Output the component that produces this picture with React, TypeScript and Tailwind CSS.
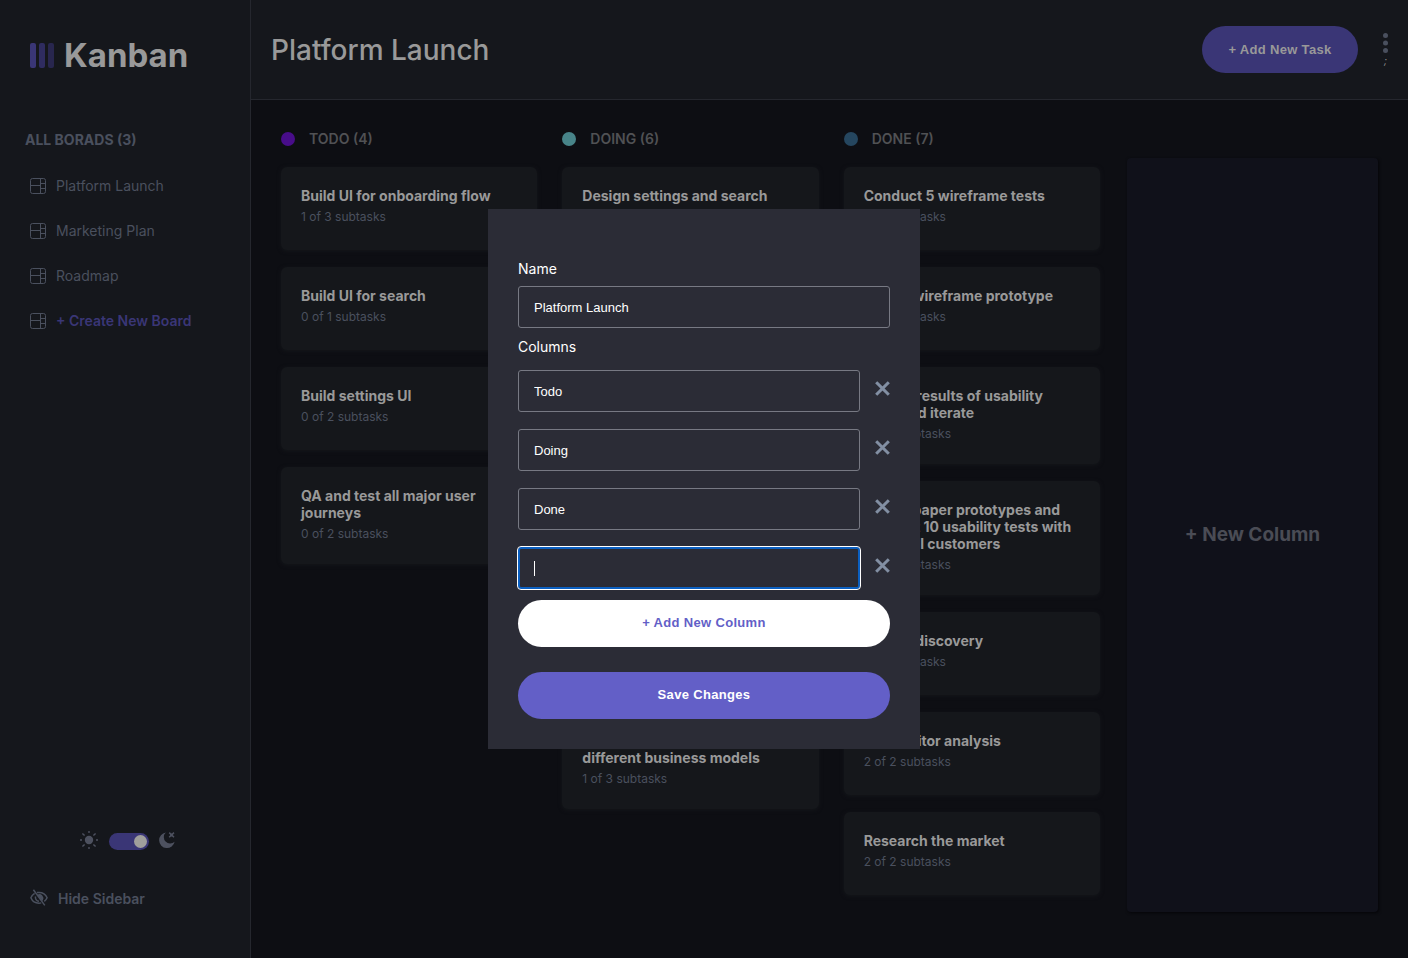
import React from 'react';

interface Task {
  title: string;
  subtasks: string;
}

interface Column {
  name: string;
  dot: string;
  tasks: Task[];
}

const boards = ['Platform Launch', 'Marketing Plan', 'Roadmap'];

const columns: Column[] = [
  {
    name: 'TODO',
    dot: 'bg-[#480d8a]',
    tasks: [
      { title: 'Build UI for onboarding flow', subtasks: '1 of 3 subtasks' },
      { title: 'Build UI for search', subtasks: '0 of 1 subtasks' },
      { title: 'Build settings UI', subtasks: '0 of 2 subtasks' },
      { title: 'QA and test all major user journeys', subtasks: '0 of 2 subtasks' },
    ],
  },
  {
    name: 'DOING',
    dot: 'bg-[#488489]',
    tasks: [
      { title: 'Design settings and search screens', subtasks: '1 of 3 subtasks' },
      { title: 'Add account management endpoints', subtasks: '2 of 3 subtasks' },
      { title: 'Design onboarding flow', subtasks: '1 of 3 subtasks' },
      { title: 'Add search endpoints', subtasks: '1 of 2 subtasks' },
      { title: 'Add authentication endpoints', subtasks: '1 of 2 subtasks' },
      {
        title: 'Research pricing points of various competitors and trial different business models',
        subtasks: '1 of 3 subtasks',
      },
    ],
  },
  {
    name: 'DONE',
    dot: 'bg-[#25465f]',
    tasks: [
      { title: 'Conduct 5 wireframe tests', subtasks: '1 of 1 subtasks' },
      { title: 'Create wireframe prototype', subtasks: '1 of 1 subtasks' },
      { title: 'Review results of usability tests and iterate', subtasks: '3 of 3 subtasks' },
      {
        title: 'Create paper prototypes and conduct 10 usability tests with potential customers',
        subtasks: '2 of 2 subtasks',
      },
      { title: 'Market discovery', subtasks: '1 of 1 subtasks' },
      { title: 'Competitor analysis', subtasks: '2 of 2 subtasks' },
      { title: 'Research the market', subtasks: '2 of 2 subtasks' },
    ],
  },
];

const columnFields = ['Todo', 'Doing', 'Done', ''];

function BoardIcon() {
  return (
    <svg className="size-4 shrink-0" viewBox="0 0 16 16" fill="none" stroke="#4a505e" aria-hidden="true">
      <rect x="0.5" y="0.5" width="15" height="15" rx="2" />
      <path d="M10.5 0.5v15M0.5 7.5h10M10.5 5.5h5M10.5 10.5h5" />
    </svg>
  );
}

function SunIcon() {
  return (
    <svg className="size-5" viewBox="0 0 20 20" fill="#4d515f" aria-hidden="true">
      <circle cx="10" cy="9" r="4.2" />
      <path
        d="M10 0v2M10 16v2M1 9h2M17 9h2M3.4 2.4l2.2 2.2M14.4 13.4l2.2 2.2M3.4 15.6l2.2-2.2M14.4 4.6l2.2-2.2"
        stroke="#4d515f"
        strokeWidth="1.4"
      />
    </svg>
  );
}

function MoonIcon() {
  return (
    <svg className="h-[18px] w-4" viewBox="0 0 16 18" fill="#4d515f" aria-hidden="true">
      <path d="M6.8 0.6A6 6 0 0 0 15.6 9.8 7.8 7.8 0 1 1 6.8 0.6Z" />
      <path d="M10.2 0.6l4.8 4.6M15 0.6l-4.8 4.6" stroke="#4d515f" strokeWidth="1.5" />
      <circle cx="12.6" cy="2.9" r="1.5" />
    </svg>
  );
}

function HiddenEyeIcon() {
  return (
    <svg className="h-5 w-[18px]" viewBox="0 0 18 20" fill="none" stroke="#4a505e" strokeWidth="1.5" aria-hidden="true">
      <path d="M4.6 4.4C2.8 5.6 1.5 7.3 0.9 8.8c1.2 3 4.5 5.4 8.1 5.4 0.8 0 1.5-0.1 2.2-0.3M7 3.6c0.6-0.1 1.3-0.2 2-0.2 3.6 0 6.9 2.4 8.1 5.4-0.5 1.2-1.5 2.5-2.8 3.5M5.6 7.4A3.6 3.6 0 0 0 9 12.2M3.4 0.8l11.4 15.6" />
      <path d="M8 6.2a3.3 3.3 0 0 1 4.2 4.6Z" fill="#4a505e" />
    </svg>
  );
}

function Sidebar() {
  return (
    <aside className="flex w-[251px] shrink-0 flex-col border-r border-[#25272e] bg-[#15171c]">
      <div className="flex items-center gap-[10px] pt-[31px] pl-[30px]">
        <svg className="h-[25px] w-6" viewBox="0 0 24 25" aria-hidden="true">
          <rect width="6" height="25" rx="2" fill="#3a3676" />
          <rect x="9" width="6" height="25" rx="2" fill="#2f2c60" />
          <rect x="18" width="6" height="25" rx="2" fill="#28264e" />
        </svg>
        <span className="text-[33px] leading-12 font-bold text-[#999999]">Kanban</span>
      </div>

      <h2 className="mt-[51px] pl-[25px] text-sm font-bold text-[#4a505e]">ALL BORADS (3)</h2>

      <nav className="mt-[26px] flex flex-col gap-[25px] pl-[30px] text-sm text-[#4a505e]">
        {boards.map((board) => (
          <a key={board} href="#" className="flex items-center gap-[10px]">
            <BoardIcon />
            <span>{board}</span>
          </a>
        ))}
        <button type="button" className="flex items-center gap-[10px] font-semibold text-[#3a3676]">
          <BoardIcon />
          <span>+ Create New Board</span>
        </button>
      </nav>

      <div className="mt-auto flex items-center justify-center gap-[10px] pl-1">
        <SunIcon />
        <label className="flex h-[17px] w-10 cursor-pointer items-center rounded-full bg-[#3a3676] px-[2px]">
          <input type="checkbox" defaultChecked aria-label="Dark mode" className="peer sr-only" />
          <span className="size-[13px] rounded-full bg-[#a09f9c] peer-checked:ml-auto" />
        </label>
        <MoonIcon />
      </div>

      <button
        type="button"
        className="mt-[38px] mb-[49px] flex items-center gap-[10px] pl-[30px] text-sm font-semibold text-[#4a505e]"
      >
        <HiddenEyeIcon />
        Hide Sidebar
      </button>
    </aside>
  );
}

function Header() {
  return (
    <header className="flex h-[100px] shrink-0 items-center justify-between border-b border-[#25272e] bg-[#15171c] px-5">
      <h1 className="text-[28px] font-medium text-[#999999]">Platform Launch</h1>
      <div className="flex items-center gap-[25px]">
        <button
          type="button"
          className="h-[47px] w-[156px] rounded-full bg-[#3a3676] font-['Liberation_Sans',sans-serif] text-[13px] font-bold tracking-wide text-[#999999]"
        >
          + Add New Task
        </button>
        <button type="button" aria-label="Board options" className="flex flex-col items-center text-[#8a8a8a]">
          <svg className="h-5 w-[5px]" viewBox="0 0 5 20" fill="#4a505e" aria-hidden="true">
            <circle cx="2.5" cy="2.5" r="2.5" />
            <circle cx="2.5" cy="10" r="2.5" />
            <circle cx="2.5" cy="17.5" r="2.5" />
          </svg>
          <span className="text-[10px] leading-[14px] italic">;</span>
        </button>
      </div>
    </header>
  );
}

function TaskCard({ title, subtasks }: Task) {
  return (
    <article className="mb-[17px] min-h-[83px] rounded-md bg-[#15171b] px-5 pt-5 pb-[23px] shadow-[0_1px_4px_#15171b]">
      <h3 className="text-sm leading-[17px] font-bold text-[#999999]">{title}</h3>
      <p className="mt-[5px] text-xs leading-[15px] text-[#4a505e]">{subtasks}</p>
    </article>
  );
}

function Board() {
  return (
    <main className="flex flex-1 items-stretch gap-[25px] px-[30px] pt-[30px] pb-[46px]">
      {columns.map((column) => (
        <section key={column.name} className="min-w-0 flex-1">
          <div className="mb-[19px] flex h-[18px] items-center gap-[14px]">
            <span className={`size-[14px] rounded-full ${column.dot}`} />
            <h2 className="text-sm font-semibold text-[#505154]">
              {column.name} ({column.tasks.length})
            </h2>
          </div>
          {column.tasks.map((task) => (
            <TaskCard key={task.title} {...task} />
          ))}
        </section>
      ))}
      <button
        type="button"
        className="mt-7 ml-[2px] w-[251px] rounded-sm bg-[#10111a] text-[19px] font-bold text-[#4a4c55] shadow-[1px_1px_3px_#050508]"
      >
        + New Column
      </button>
    </main>
  );
}

const fieldClass =
  "h-[42px] w-full rounded-[3px] border border-[#777983] bg-transparent px-[15px] font-['Liberation_Sans',sans-serif] text-[13px] text-white";

function ColumnField({ name, label, active }: { name: string; label: string; active: boolean }) {
  return (
    <div className="flex items-center gap-[15px]">
      <div className="relative flex-1">
        <input
          type="text"
          defaultValue={name}
          autoFocus={active}
          aria-label={label}
          className={`${fieldClass} ${active ? 'peer caret-transparent' : ''} focus:border-2 focus:border-[#0b5fc0] focus:px-[14px] focus:outline-1 focus:outline-white`}
        />
        {active && <span className="pointer-events-none absolute inset-y-0 left-4 my-auto h-[15px] w-px bg-white" />}
      </div>
      <button type="button" aria-label="Remove column" className="mb-[6px]">
        <svg className="size-[15px]" viewBox="0 0 15 15" stroke="#828fa3" strokeWidth="3" aria-hidden="true">
          <path d="M1.2 1.2l12.6 12.6M13.8 1.2L1.2 13.8" />
        </svg>
      </button>
    </div>
  );
}

function EditBoardModal() {
  return (
    <div className="fixed inset-0 flex items-center justify-center">
      <form
        role="dialog"
        aria-label="Edit board"
        className="flex w-[432px] flex-col bg-[#2b2c36] px-[30px] pt-[50px] pb-[30px] text-sm text-white"
        onSubmit={(e) => e.preventDefault()}
      >
        <label htmlFor="board-name">Name</label>
        <div className="mt-[7px] flex">
          <input id="board-name" type="text" defaultValue="Platform Launch" className={fieldClass} />
        </div>

        <fieldset className="mt-[9px]">
          <legend>Columns</legend>
          <div className="mt-[13px] flex flex-col gap-[17px]">
            {columnFields.map((name, i) => (
              <ColumnField key={i} name={name} label={`Column ${i + 1}`} active={i === columnFields.length - 1} />
            ))}
          </div>
        </fieldset>

        <button
          type="button"
          className="mt-[11px] h-[47px] rounded-full bg-white font-['Liberation_Sans',sans-serif] text-[13px] font-bold tracking-wide text-[#635fc7]"
        >
          + Add New Column
        </button>
        <button
          type="submit"
          className="mt-[25px] h-[47px] rounded-full bg-[#635fc7] font-['Liberation_Sans',sans-serif] text-[13px] font-bold tracking-wide text-white"
        >
          Save Changes
        </button>
      </form>
    </div>
  );
}

export default function App() {
  return (
    <div className="flex min-h-screen bg-[#0d0e13] font-['Inter',sans-serif]">
      <Sidebar />
      <div className="flex min-w-0 flex-1 flex-col">
        <Header />
        <Board />
      </div>
      <EditBoardModal />
    </div>
  );
}
